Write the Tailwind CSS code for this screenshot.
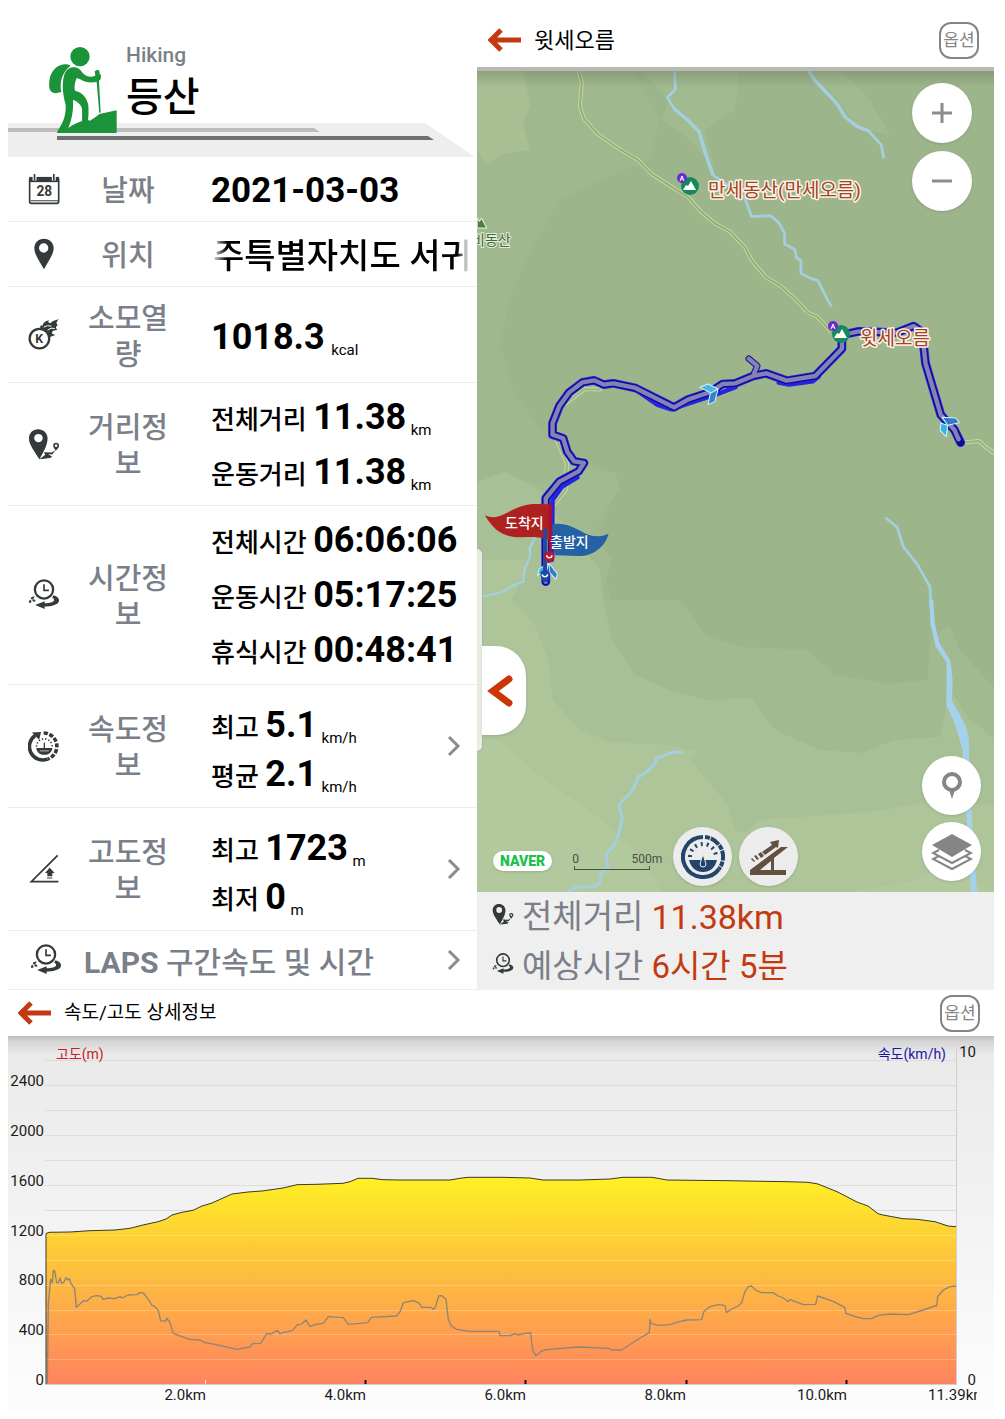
<!DOCTYPE html>
<html lang="ko">
<head>
    <meta charset="UTF-8">
    <meta name="viewport" content="width=device-width, initial-scale=1.0">
    <title>등산 기록 - 윗세오름</title>
    <script src="https://cdn.jsdelivr.net/npm/@tailwindcss/browser@4"></script>
</head>
<body class="min-h-screen bg-white font-['Roboto','Noto_Sans_CJK_KR',sans-serif] text-black">

    <!-- Shared icons -->
    <svg class="hidden">
        <symbol id="icon-clock" viewBox="22 26 98 98">
            <circle cx="71" cy="58" r="28" fill="none" stroke="currentColor" stroke-width="7"/>
            <path d="M71 42V61H86" fill="none" stroke="currentColor" stroke-width="5"/>
            <path d="M100 76Q118 82 117 93C114 106 90 110 73 110V118L44 106 73 94V100C88 100 101 97 102 91Q103 87 96 83Z" fill="currentColor"/>
            <path d="M32 82L42 79 40 86 30 89ZM25 92L31 90 33 97 26 100ZM34 89L41 88 46 94 38 96Z" fill="currentColor"/>
        </symbol>
        <symbol id="icon-route" viewBox="22 350 98 98">
            <path fill-rule="evenodd" d="M53 354C37 354 25 366 25 382C25 402 44 424 57 446C66 428 82 404 82 382C82 366 69 354 53 354ZM54 368A13 13 0 1 1 54 394A13 13 0 1 1 54 368Z" fill="currentColor"/>
            <path d="M57 446L75 432 70 424 94 425 106 418 96 431 84 430 96 438 90 442Z" fill="currentColor"/>
            <path fill-rule="evenodd" d="M108 395C102 395 99 399 99 404C99 410 104 414 107 420C112 414 117 410 117 404C117 399 114 395 108 395ZM108 400A4 4 0 1 1 108 408A4 4 0 1 1 108 400Z" fill="currentColor"/>
        </symbol>
        <symbol id="icon-chevron" viewBox="0 0 14 22">
            <path d="M2 2L11 11 2 20" fill="none" stroke="currentColor" stroke-width="3"/>
        </symbol>
        <symbol id="icon-back" viewBox="0 0 34 24">
            <path d="M33 12H4M13 2L3 12 13 22" fill="none" stroke="currentColor" stroke-width="5"/>
        </symbol>
        <symbol id="icon-summit" viewBox="0 0 22 22">
            <circle cx="13" cy="13" r="9" fill="#14895b"/>
            <path d="M6 17L9 12 11 13 14 8 19 17Z" fill="#fff"/>
            <circle cx="5" cy="5" r="5" fill="#6a2bd0"/>
            <path d="M5 3L3 8M5 3L7 8M4 6H6" fill="none" stroke="#fff" stroke-width="1"/>
        </symbol>
    </svg>

    <main class="pl-2 pr-[11px] pb-[7px]">
        <div class="grid grid-cols-[469fr_517fr]">

            <!-- Record summary -->
            <section class="min-w-0">
                <header class="relative h-[157px]">
                    <svg class="absolute inset-x-0 bottom-0 w-full" viewBox="8 123 469 34">
                        <path d="M8 123H425L475 157H8Z" fill="#eeeeee"/>
                        <path d="M8 128H314L320 132H8Z" fill="#bdbdbd"/>
                        <path d="M57 136H428L434 140H57Z" fill="#6d706f"/>
                    </svg>
                    <svg class="absolute left-10 top-[46px] h-[88px] w-[70px] text-[#1b9439]" viewBox="144 138 210 264" fill="currentColor">
                        <circle cx="240" cy="170" r="29"/>
                        <path d="M212 197C190 184 158 200 150 232C145 256 146 276 162 279C172 281 178 276 184 276C178 248 186 216 212 197Z"/>
                        <path d="M205 206C222 198 235 202 243 212C252 224 260 230 276 230L286 227 284 214 292 209 298 212 299 221 303 225 302 238 297 242 302 336 298 340 290 246C276 249 254 248 241 238L230 234C224 248 222 262 225 272C246 276 262 294 265 316C266 334 266 346 264 360L270 362 288 350 298 342 350 331V399H171L173 392C190 368 198 346 197 314C190 290 186 262 190 236C192 222 197 212 205 206Z"/>
                        <path d="M219 299C232 304 244 314 246 326C247 342 246 352 246 363C230 369 218 374 205 384C215 360 221 330 219 299Z" fill="#fff"/>
                    </svg>
                    <div class="pl-[118px] pt-[42px]">
                        <p class="text-[21px] leading-[26px] font-medium text-[#7b7f8a]">Hiking</p>
                        <h1 class="text-[40px] leading-[60px] font-medium">등산</h1>
                    </div>
                </header>

                <dl class="text-[26px] leading-[55px] font-medium">
                    <div class="grid grid-cols-[32px_88px_1fr] items-center gap-x-6 border-b border-[#ececec] py-1 pl-5">
                        <svg class="size-8 text-[#34393c]" viewBox="82 518 98 98" fill="none" stroke="currentColor">
                            <rect x="87" y="533" width="89" height="78" rx="6" stroke-width="5"/>
                            <path d="M86 530H177V546H86Z" fill="currentColor" stroke="none"/>
                            <path d="M102 522V541M161 522V541" stroke="#fff" stroke-width="12"/>
                            <path d="M102 521V541M161 521V541" stroke-width="5"/>
                            <path d="M90 603H174" stroke-width="3"/>
                            <text x="132" y="589" text-anchor="middle" font-size="42" font-weight="700" fill="currentColor" stroke="none">28</text>
                        </svg>
                        <dt class="pt-1 text-center text-[29px] leading-[36px] text-[#7b7f8a]">날짜</dt>
                        <dd class="pt-1 pl-[15px] text-[35px] leading-[52px] font-bold">2021-03-03</dd>
                    </div>

                    <div class="grid grid-cols-[32px_88px_1fr] items-center gap-x-6 border-b border-[#ececec] py-1 pl-5">
                        <svg class="size-8 text-[#34393c]" viewBox="82 714 96 96" fill="currentColor">
                            <path fill-rule="evenodd" d="M130 716C113 716 101 728 101 744C101 764 118 786 130 808C141 786 159 764 159 744C159 728 146 716 130 716ZM129 730A14 14 0 1 1 129 758A14 14 0 1 1 129 730Z"/>
                        </svg>
                        <dt class="pt-1 text-center text-[29px] leading-[36px] text-[#7b7f8a]">위치</dt>
                        <dd class="mr-[8px] ml-[15px] overflow-hidden whitespace-nowrap pt-1 pl-[2px] text-[34px] leading-[52px] [mask-image:linear-gradient(to_right,transparent,black_16px,black_246px,transparent)]">주특별자치도 서귀</dd>
                    </div>

                    <div class="grid grid-cols-[32px_88px_1fr] items-center gap-x-6 border-b border-[#ececec] pt-[10px] pb-[9px] pl-5">
                        <svg class="size-8 text-[#34393c]" viewBox="22 28 98 98">
                            <circle cx="57" cy="88" r="30" fill="none" stroke="currentColor" stroke-width="7"/>
                            <path d="M66 50C68 38 78 34 86 32C82 38 86 42 92 40C98 32 108 32 117 29C108 36 108 42 112 46L117 45C108 50 104 54 112 60C104 64 98 62 96 68C94 74 100 76 106 76C98 82 92 80 88 84C84 72 76 62 60 56C58 50 62 44 66 50Z" fill="currentColor"/>
                            <path d="M70 53Q82 45 94 50M82 62Q92 53 104 57" fill="none" stroke="#fff" stroke-width="3"/>
                            <text x="56" y="101" text-anchor="middle" font-size="38" font-weight="700" fill="currentColor">K</text>
                        </svg>
                        <dt class="pt-1 text-center text-[29px] leading-[36px] text-[#7b7f8a]">소모열량</dt>
                        <dd class="pt-[10px] pl-[15px] leading-[52px]"><b class="text-4xl leading-none">1018.3</b> <span class="align-sub text-[15px] leading-none font-normal">kcal</span></dd>
                    </div>

                    <div class="grid grid-cols-[32px_88px_1fr] items-center gap-x-6 border-b border-[#ececec] py-[2px] pl-5">
                        <svg class="size-8 text-[#34393c]"><use href="#icon-route"/></svg>
                        <dt class="pt-1 text-center text-[29px] leading-[36px] text-[#7b7f8a]">거리정보</dt>
                        <dd class="pt-2 pl-[15px]">
                            <p>전체거리 <b class="text-4xl leading-none">11.38</b> <span class="-ml-[2px] align-sub text-[15px] leading-none font-normal">km</span></p>
                            <p>운동거리 <b class="text-4xl leading-none">11.38</b> <span class="-ml-[2px] align-sub text-[15px] leading-none font-normal">km</span></p>
                        </dd>
                    </div>

                    <div class="grid grid-cols-[32px_88px_1fr] items-center gap-x-6 border-b border-[#ececec] pt-[2px] pb-[3px] pl-5">
                        <svg class="size-8 text-[#34393c]"><use href="#icon-clock"/></svg>
                        <dt class="pt-1 text-center text-[29px] leading-[36px] text-[#7b7f8a]">시간정보</dt>
                        <dd class="whitespace-nowrap pt-2 pl-[15px]">
                            <p>전체시간 <b class="text-4xl leading-none">06:06:06</b></p>
                            <p>운동시간 <b class="text-4xl leading-none">05:17:25</b></p>
                            <p>휴식시간 <b class="text-4xl leading-none">00:48:41</b></p>
                        </dd>
                    </div>

                    <div class="grid grid-cols-[32px_88px_1fr_14px] items-center gap-x-6 border-b border-[#ececec] py-[5px] pr-4 pl-5">
                        <svg class="size-8 text-[#34393c]" viewBox="22 476 98 98" fill="none" stroke="currentColor">
                            <path d="M44 493A41 41 0 0 0 82 565" stroke-width="11"/>
                            <path d="M34 484L62 482 56 506Z" fill="currentColor" stroke="none"/>
                            <path d="M70 485A41 41 0 0 1 82 565" stroke-width="11" stroke-dasharray="13 5"/>
                            <path d="M48 527A23 23 0 0 1 96 527" stroke-width="5" stroke-dasharray="4 6"/>
                            <path d="M47 531H97C95 545 84 552 72 552C60 552 49 545 47 531Z" fill="currentColor" stroke="none"/>
                            <path d="M72 515V535" stroke-width="4"/>
                            <path d="M58 540H86" stroke="#fff" stroke-width="2"/>
                        </svg>
                        <dt class="pt-1 text-center text-[29px] leading-[36px] text-[#7b7f8a]">속도정보</dt>
                        <dd class="pt-[14px] pl-[15px] leading-[49px]">
                            <p>최고 <b class="text-4xl leading-none">5.1</b> <span class="-ml-[2px] align-sub text-[15px] leading-none font-normal">km/h</span></p>
                            <p>평균 <b class="text-4xl leading-none">2.1</b> <span class="-ml-[2px] align-sub text-[15px] leading-none font-normal">km/h</span></p>
                        </dd>
                        <a href="#speed" aria-label="속도정보 보기"><svg class="h-[22px] w-[14px] text-[#8c8c8c]"><use href="#icon-chevron"/></svg></a>
                    </div>

                    <div class="grid grid-cols-[32px_88px_1fr_14px] items-center gap-x-6 border-b border-[#ececec] py-[5px] pr-4 pl-5">
                        <svg class="size-8 text-[#34393c]" viewBox="24 848 96 96" fill="none" stroke="currentColor">
                            <path d="M113 855L34 934H115" stroke-width="5"/>
                            <path d="M89 892L104 908H97V918H82V908H75Z" fill="currentColor" stroke="none"/>
                            <path d="M81 923H97" stroke-width="3"/>
                        </svg>
                        <dt class="pt-1 text-center text-[29px] leading-[36px] text-[#7b7f8a]">고도정보</dt>
                        <dd class="pt-[14px] pl-[15px] leading-[49px]">
                            <p>최고 <b class="text-4xl leading-none">1723</b> <span class="-ml-[2px] align-sub text-[15px] leading-none font-normal">m</span></p>
                            <p>최저 <b class="text-4xl leading-none">0</b> <span class="-ml-[2px] align-sub text-[15px] leading-none font-normal">m</span></p>
                        </dd>
                        <a href="#altitude" aria-label="고도정보 보기"><svg class="h-[22px] w-[14px] text-[#8c8c8c]"><use href="#icon-chevron"/></svg></a>
                    </div>
                </dl>

                <a href="#laps" class="flex h-[59px] items-center border-b border-[#ececec] pr-4 pl-[22px] text-[30px] font-medium text-[#7b7f8a]">
                    <svg class="size-8 text-[#34393c]"><use href="#icon-clock"/></svg>
                    <span class="grow pt-1 pl-[22px]"><b>LAPS</b> 구간속도 및 시간</span>
                    <svg class="h-[22px] w-[14px] text-[#8c8c8c]"><use href="#icon-chevron"/></svg>
                </a>
            </section>

            <!-- Route map -->
            <section class="flex min-w-0 flex-col">
                <header class="flex h-[71px] items-center border-b-4 border-[#b7b9b5] pt-[13px] pr-[15px] pl-[11px]">
                    <button type="button" aria-label="뒤로"><svg class="h-6 w-[34px] text-[#c43a10]"><use href="#icon-back"/></svg></button>
                    <h2 class="ml-3 grow text-[22px]">윗세오름</h2>
                    <button type="button" class="h-[37px] w-10 rounded-xl border-2 border-[#858585] text-[17px] leading-none text-[#858585]">옵션</button>
                </header>

                <div class="relative grow overflow-hidden bg-[#9db58b]">
                    <svg class="absolute inset-0 size-full" viewBox="477 71 517 821" preserveAspectRatio="xMidYMid slice">
                        <defs>
                            <linearGradient id="map-shade" x1="0" y1="0" x2="0" y2="1">
                                <stop offset="0" stop-color="#5c6b50" stop-opacity=".35"/>
                                <stop offset="1" stop-color="#5c6b50" stop-opacity="0"/>
                            </linearGradient>
                        </defs>
                        <!-- terrain -->
                        <path d="M477 68H630L660 120 650 160 600 180 560 200 530 250 510 300 500 345 515 395 548 440 620 480 600 530 610 600 477 600Z" fill="#a0b88e"/>
                        <path d="M477 68H523L530 105 523 125 530 150 500 155 486 165 477 150Z" fill="#a8bf94"/>
                        <path d="M640 68L668 100 662 120 690 140 715 170 705 130 735 110 740 68Z" fill="#a2ba90"/>
                        <path d="M800 68L830 90 860 130 890 135 870 100 840 68Z" fill="#a2ba90"/>
                        <path d="M477 482L505 472 540 485 575 470 615 472 620 490 590 530 612 560 600 600 680 600 705 635 740 647 806 650 835 675 890 684 928 680 930 640 950 625 960 650 994 688V892H477Z" fill="#a2ba90"/>
                        <path d="M477 482L505 472 540 490 560 520 600 570 603 600 612 640 635 675 670 690 705 700 752 698 775 730 820 750 860 753 895 740 940 737 950 690 970 720 994 738V892H477Z" fill="#a8c095"/>
                        <path d="M477 560L530 560 512 600 535 625 548 660 553 700 580 730 610 742 670 745 697 751 690 760 728 805 735 830 745 833 760 820 870 812 940 800 994 805V892H477Z" fill="#aec59a"/>
                        <path d="M498 740L545 780 595 815 630 845 662 892H477V740Z" fill="#b2c99e"/>
                        <path d="M850 892L910 882 950 865 994 892Z" fill="#b2c99e"/>

                        <!-- streams and trails, upper half -->
                        <g transform="translate(470 0) scale(.3412 .3333)" fill="none" stroke-linejoin="round">
                            <path d="M599 200L602 268 578 292 600 328 640 362 672 396 690 460 712 525 745 548 806 595 825 650 882 647 905 668 922 700 922 732 952 748 956 772 970 782 970 820 1000 836 1020 842 1048 900 1060 920" stroke="#a3cfe0" stroke-width="8"/>
                            <path d="M600 328L640 362 672 396 690 460 712 525M985 200L1010 240 1075 310 1100 352 1135 380 1170 394" stroke="#a3cfe0" stroke-width="10"/>
                            <path d="M1168 393L1205 434 1213 475" stroke="#a3cfe0" stroke-width="8"/>
                            <path d="M316 200L328 248 322 318 334 356 374 402 442 450 490 478 532 522 590 560 640 592 676 634 720 672 762 695 806 742 826 782 868 832 910 858 956 900 990 938 1018 950 1060 998" stroke="#c9e0a0" stroke-width="11"/>
                            <path d="M316 200L328 248 322 318 334 356 374 402 442 450 490 478 532 522 590 560 640 592 676 634 720 672 762 695 806 742 826 782 868 832 910 858 956 900 990 938 1018 950 1060 998" stroke="#93ad7c" stroke-width="6"/>
                            <path d="M21 655L28 664 34 655 49 684H21Z" fill="#4d7f45" stroke="#e8f0df" stroke-width="3"/>
                        </g>

                        <g transform="translate(470 300) scale(.3412 .3333)" fill="none" stroke-linejoin="round" stroke-linecap="round">
                            <path d="M382 268H334L280 310M250 410L284 490 280 570 245 615M1440 428L1492 423 1510 440 1540 462" stroke="#c9e0a0" stroke-width="12"/>
                            <path d="M382 268H334L280 310M250 410L284 490 280 570 245 615M1440 428L1492 423 1510 440 1540 462" stroke="#9db58b" stroke-width="7"/>
                            <path d="M190 715L175 745 176 770 160 810 156 845 130 855 90 878 36 890" stroke="#a3cfe0" stroke-width="7"/>
                            <path d="M1220 655L1252 682 1270 740 1310 792 1348 860 1354 965" stroke="#a3cfe0" stroke-width="8"/>

                            <!-- walked route -->
                            <g stroke="#2424e4">
                                <path d="M222 845L222 595 262 545 318 514 334 489 305 484 285 455 273 415 242 404 242 370 262 318 290 278 330 247 364 241 392 254 420 250 485 264 598 322 640 298 705 276 740 252 778 250 830 228 868 220 928 242 1012 228 1090 146V105L1140 94 1250 98 1300 78 1325 96 1335 190 1380 345 1420 390 1438 428" stroke-width="26"/>
                                <path d="M240 780L242 600 270 560 315 532M500 280L550 315 590 328 720 284 778 262M905 248L935 254 1005 244 1022 230M832 222L842 198 817 176" stroke-width="13"/>
                            </g>
                            <g stroke="#0d0d94">
                                <path d="M222 845L222 595 262 545 318 514 334 489 305 484 285 455 273 415 242 404 242 370 262 318 290 278 330 247 364 241 392 254 420 250 485 264 598 322 640 298 705 276 740 252 778 250 830 228 868 220 928 242 1012 228 1090 146V105L1140 94 1250 98 1300 78 1325 96 1335 190 1380 345 1420 390 1438 428" stroke-width="21"/>
                                <path d="M832 222L842 198 817 176" stroke-width="19"/>
                            </g>
                            <path d="M222 845L222 595 262 545 318 514 334 489 305 484 285 455 273 415 242 404 242 370 262 318 290 278 330 247 364 241 392 254 420 250 485 264 598 322 640 298 705 276 740 252 778 250 830 228 868 220 928 242 1012 228 1090 146V105L1140 94 1250 98 1300 78 1325 96 1335 190 1380 345 1420 390 1432 418M832 222L842 198 817 176" stroke="#8581b6" stroke-width="13"/>

                            <!-- direction arrows -->
                            <g stroke="#d5f1fa" stroke-width="3">
                                <path d="M674 262L698 252 727 267 712 282Z" fill="#45b8e6"/>
                                <path d="M727 267L718 304 698 314 704 280Z" fill="#2f86cc"/>
                                <path d="M1384 352L1424 354 1434 368 1400 376Z" fill="#2f7cc8"/>
                                <path d="M1380 370L1400 376 1396 410 1378 392Z" fill="#35b5e0"/>
                                <path d="M232 790L256 822 252 838 232 816Z" fill="#2f7cc8"/>
                                <path d="M232 790L203 806 198 826 222 815Z" fill="#35b5e0"/>
                            </g>

                            <!-- start and finish flags -->
                            <path d="M44 646C90 668 115 618 185 612L236 613V724C200 702 160 716 125 710C88 704 65 684 44 646Z" fill="#ae211f"/>
                            <path d="M238 674C290 662 318 696 352 706Q382 713 406 701C396 740 362 768 318 768L248 766Z" fill="#2561a5"/>
                            <path d="M236 614V760" stroke="#a0123c" stroke-width="10"/>
                            <path d="M220 690V820" stroke="#1f4aa0" stroke-width="11"/>
                            <circle cx="232" cy="770" r="16" fill="#b01838"/>
                            <path d="M225 768A8 8 0 0 0 240 768" stroke="#fff" stroke-width="5"/>
                            <path d="M206 824A14 14 0 0 1 234 824L228 846H214Z" fill="#1a48a8"/>
                            <path d="M212 825A8 8 0 0 0 227 825" stroke="#fff" stroke-width="5"/>
                        </g>

                        <!-- streams, lower half -->
                        <g transform="translate(470 600) scale(.3412 .3333)" fill="none" stroke-linejoin="round">
                            <path d="M626 459L602 455 545 475 543 490 515 518 494 530 475 574 436 615 446 655 438 695 425 730 398 766 404 804 385 820 380 850 362 860 310 862 285 876" stroke="#a3cfe0" stroke-width="9"/>
                            <path d="M1346 0H1358L1362 70 1376 130 1408 182 1415 245 1412 300 1452 375 1461 410 1464 490 1472 680 1486 876H1468L1458 700 1444 450 1420 370 1396 315 1397 188 1365 140 1350 75Z" fill="#a6d1ec"/>
                        </g>
                        <rect x="477" y="71" width="517" height="16" fill="url(#map-shade)"/>

                        <!-- place names -->
                        <use href="#icon-summit" x="677" y="173" width="22" height="22"/>
                        <use href="#icon-summit" x="828" y="321" width="22" height="22"/>
                        <g fill="#a34420" stroke="#fbf3ea" stroke-width="3" paint-order="stroke" stroke-linejoin="round" font-size="19">
                            <text x="708" y="197">만세동산(만세오름)</text>
                            <text x="860" y="345">윗세오름</text>
                        </g>
                        <text x="472" y="245" font-size="14" fill="#3f6a3b" stroke="#e3ecd9" stroke-width="2" paint-order="stroke">비동산</text>
                        <text x="505" y="528" font-size="14" font-weight="500" fill="#fff">도착지</text>
                        <text x="550" y="547" font-size="14" font-weight="500" fill="#fff">출발지</text>
                    </svg>

                    <div class="absolute top-3 right-[22px] flex flex-col gap-2">
                        <button type="button" aria-label="확대" class="flex size-[60px] items-center justify-center rounded-full bg-white shadow">
                            <svg class="size-5" viewBox="0 0 20 20"><path d="M10 0V20M0 10H20" stroke="#8c8c8c" stroke-width="3"/></svg>
                        </button>
                        <button type="button" aria-label="축소" class="flex size-[60px] items-center justify-center rounded-full bg-white shadow">
                            <svg class="size-5" viewBox="0 0 20 20"><path d="M0 10H20" stroke="#8c8c8c" stroke-width="3"/></svg>
                        </button>
                    </div>

                    <!-- side drawer handle -->
                    <div class="absolute bottom-[140px] left-0 h-[204px] w-[6px] rounded-r-md border border-l-0 border-[#a9b3a2] bg-white/70"></div>
                    <button type="button" aria-label="패널 열기" class="absolute bottom-[157px] left-[5px] flex h-[89px] w-[44px] items-center rounded-r-[30px] bg-white pl-1 shadow">
                        <svg class="h-[34px] w-7" viewBox="0 0 28 34"><path d="M23 5L7 17 23 29" fill="none" stroke="#cc3508" stroke-width="7" stroke-linecap="round"/></svg>
                    </button>

                    <div class="absolute right-[13px] bottom-[11px] flex flex-col gap-[7px]">
                        <button type="button" aria-label="현재 위치" class="flex size-[59px] items-center justify-center rounded-full bg-white shadow">
                            <svg class="h-7 w-5" viewBox="0 0 20 28"><circle cx="10" cy="10" r="8" fill="none" stroke="#858585" stroke-width="4"/><path d="M7 18H13L10 27Z" fill="#858585"/></svg>
                        </button>
                        <button type="button" aria-label="지도 종류" class="flex size-[59px] items-center justify-center rounded-full bg-white shadow">
                            <svg class="h-[38px] w-[42px]" viewBox="0 0 42 38"><path d="M21 1L41 12 21 24 1 12Z" fill="#858585"/><path d="M8 17L2 20 21 30 40 20 34 17M8 23L2 26 21 36 40 26 34 23" fill="none" stroke="#858585" stroke-width="2"/></svg>
                        </button>
                    </div>

                    <div class="absolute bottom-[6px] left-4 flex items-center">
                        <a href="#naver" class="mt-2 rounded-full bg-white px-[7px] text-[14px] leading-5 font-black text-[#1cc04c] shadow">NAVER</a>
                        <div class="mt-2 ml-5 text-[12px] leading-[14px] text-[#4a4f46]">
                            <div class="flex w-[90px] justify-between"><span>0</span><span>500m</span></div>
                            <div class="ml-[2px] h-1 w-[76px] border border-t-0 border-[#4a4f46]"></div>
                        </div>
                        <button type="button" aria-label="속도 그래프" class="ml-[11px] flex size-[59px] items-center justify-center rounded-full bg-[#ececec] shadow">
                            <svg class="size-11" viewBox="0 0 44 44" fill="none" stroke="#23456b">
                                <path d="M22 2A20 20 0 1 0 38 34" stroke-width="4"/>
                                <path d="M24 2A20 20 0 0 1 38 34" stroke-width="4" stroke-dasharray="5 1 10 1"/>
                                <path d="M9 22A13 13 0 0 1 35 22" stroke-width="4" stroke-dasharray="2 4"/>
                                <path d="M8 25H36C34 33 29 37 22 37C15 37 10 33 8 25Z" fill="#23456b" stroke="none"/>
                                <path d="M22 19L25 29A3 3 0 1 1 19 29Z" fill="#23456b" stroke="#ececec" stroke-width="1"/>
                            </svg>
                        </button>
                        <button type="button" aria-label="고도 그래프" class="ml-[7px] flex size-[59px] items-center justify-center rounded-full bg-[#ececec] shadow">
                            <svg class="h-9 w-[38px]" viewBox="0 0 38 36" fill="#64503f">
                                <path fill-rule="evenodd" d="M0 31L31 8 38 8 24 19V31H36V36H0ZM10 31H21V22Z"/>
                                <path d="M12 13L22 6 20 3 29 1 28 9 26 8 15 16ZM8 15L11 13 14 17 11 19ZM4 17L6 16 9 20 7 21ZM1 20L2 19 5 22 4 23Z"/>
                            </svg>
                        </button>
                    </div>
                </div>

                <div class="bg-[#efefef] pb-[10px]">
                    <ul class="h-[88px] overflow-hidden pl-[15px] text-[33px] leading-[50px] text-[#7b7f8a]">
                        <li class="flex items-center">
                            <svg class="mr-2 mb-[6px] size-[22px] text-[#34393c]"><use href="#icon-route"/></svg>
                            전체거리<span class="ml-2 text-[34px] text-[#c43a10]">11.38km</span>
                        </li>
                        <li class="flex items-center">
                            <svg class="mr-2 mb-[6px] size-[22px] text-[#34393c]"><use href="#icon-clock"/></svg>
                            예상시간<span class="ml-2 text-[#c43a10]">6시간 5분</span>
                        </li>
                    </ul>
                </div>
            </section>
        </div>

        <!-- Speed and altitude chart -->
        <section>
            <header class="flex h-[46px] items-center pr-[14px] pl-[10px]">
                <button type="button" aria-label="뒤로"><svg class="h-6 w-[34px] text-[#c43a10]"><use href="#icon-back"/></svg></button>
                <h2 class="ml-3 grow text-[19px]">속도/고도 상세정보</h2>
                <button type="button" class="h-[37px] w-10 rounded-xl border-2 border-[#858585] text-[17px] leading-none text-[#858585]">옵션</button>
            </header>

            <svg class="block w-full" viewBox="8 1036 986 376" font-size="15">
                <defs>
                    <linearGradient id="panel" x1="0" y1="0" x2="0" y2="1">
                        <stop offset="0" stop-color="#bcbcbc"/>
                        <stop offset=".015" stop-color="#d6d6d6"/>
                        <stop offset=".05" stop-color="#eaeaea"/>
                        <stop offset="1" stop-color="#fdfdfd"/>
                    </linearGradient>
                    <linearGradient id="area" gradientUnits="userSpaceOnUse" x1="0" y1="1177" x2="0" y2="1384">
                        <stop offset="0" stop-color="#fff024"/>
                        <stop offset=".5" stop-color="#fdba40"/>
                        <stop offset="1" stop-color="#ff835f"/>
                    </linearGradient>
                    <clipPath id="plot"><rect x="8" y="1036" width="969" height="376"/></clipPath>
                </defs>
                <rect x="8" y="1036" width="986" height="376" fill="url(#panel)"/>
                <path d="M45 1060.500H957M45 1085.500H957M45 1110.500H957M45 1135.500H957M45 1160.500H957M45 1185.500H957M45 1210.500H957" stroke="#dcdcdc"/>

                <!-- altitude -->
                <path d="M46 1384V1233.500L49 1232.300 70 1232 90 1230.700 115 1230 130 1228.300 143 1225 158 1221.700 166 1219 172 1215 182 1212.300 193 1210.300 202 1206 212 1203 232 1194 248 1192 262 1191 283 1188 297 1184.700 317 1184.300 343 1183.300 350 1181.700 358 1178.300H372L383 1179.700 400 1180H450L460 1178.300 468 1177.300H503L530 1178 543 1180H580L610 1179 623 1177.300H652L667 1180 727 1180.700 787 1181.700 808 1182.300 818 1184 837 1191.700 857 1202 868 1206 878 1213.700 883 1215 903 1218.700 917 1219.300 935 1221.700 948 1226 956 1226.700V1384Z" fill="url(#area)"/>
                <path d="M46 1384V1233.500L49 1232.300 70 1232 90 1230.700 115 1230 130 1228.300 143 1225 158 1221.700 166 1219 172 1215 182 1212.300 193 1210.300 202 1206 212 1203 232 1194 248 1192 262 1191 283 1188 297 1184.700 317 1184.300 343 1183.300 350 1181.700 358 1178.300H372L383 1179.700 400 1180H450L460 1178.300 468 1177.300H503L530 1178 543 1180H580L610 1179 623 1177.300H652L667 1180 727 1180.700 787 1181.700 808 1182.300 818 1184 837 1191.700 857 1202 868 1206 878 1213.700 883 1215 903 1218.700 917 1219.300 935 1221.700 948 1226 956 1226.700" fill="none" stroke="#3b3826"/>
                <path d="M46 1235.500H957M46 1260.500H957M46 1285.500H957M46 1310.500H957M46 1334.500H957M46 1359.500H957" stroke="#fff" stroke-opacity=".25"/>

                <!-- speed -->
                <g transform="translate(0 1030) scale(.33333)" fill="none" stroke="#8d8678" stroke-width="4" stroke-linejoin="round">
                    <path d="M142 1060L145 820 152 748 157 758 160 722 164 722 170 758 176 758 180 744 185 760 192 756 198 743 204 750 208 746 214 762 224 776 229 832 240 822 250 812 260 814 275 800 290 797 304 799 309 808 325 804 345 806 360 800 366 804 385 795 410 794 420 788 430 789 445 808 456 826 465 830 475 842 482 872 497 874 500 864 510 878 520 910 545 920 570 928 600 930 615 938 660 946 710 958 750 951 758 941 782 940 800 911 815 912 825 904 835 903 840 912 850 907 878 902 892 884 904 883 918 870 930 889 945 884 970 880 985 860 1030 863 1045 883 1104 878 1114 862 1190 858 1200 845 1210 818 1240 812 1255 818 1266 832 1292 832 1300 838 1306 832 1316 798 1326 797 1338 808 1345 868 1354 888 1370 898 1410 904H1497L1500 917 1530 917 1545 911 1555 915 1575 910 1592 909 1598 960 1608 977 1625 963 1640 959 1735 951 1826 955 1834 960H1865L1920 924 1948 908 1950 868 1953 880 1975 886 2010 884 2040 874 2060 870 2105 869 2112 844 2130 830 2155 824 2175 827 2179 848 2190 840 2215 828 2225 818 2235 785 2245 770 2254 768 2268 781 2285 788 2318 788 2335 798 2350 804 2365 815 2370 809 2410 824 2447 823 2453 798 2500 814 2534 832 2538 850 2560 858 2590 866 2615 866 2635 856 2670 852 2725 854 2760 843 2805 828 2810 828 2813 800 2830 780 2850 770 2869 768"/>
                </g>
                <path d="M956.500 1050V1384M45 1384.500H957" stroke="#cfcfcf"/>
                <path d="M205.500 1380V1384" stroke="#e6e6e6"/>
                <path d="M365.500 1380V1384M525.500 1380V1384M686.500 1380V1384M846.500 1380V1384" stroke="#111" stroke-width="2"/>

                <g text-anchor="end" fill="#1a1a1a">
                    <text x="44" y="1086">2400</text>
                    <text x="44" y="1136">2000</text>
                    <text x="44" y="1186">1600</text>
                    <text x="44" y="1236">1200</text>
                    <text x="44" y="1285">800</text>
                    <text x="44" y="1335">400</text>
                    <text x="44" y="1385">0</text>
                    <text x="976" y="1057">10</text>
                    <text x="976" y="1385">0</text>
                    <text x="206" y="1400">2.0km</text>
                    <text x="366" y="1400">4.0km</text>
                    <text x="526" y="1400">6.0km</text>
                    <text x="686" y="1400">8.0km</text>
                    <text x="847" y="1400">10.0km</text>
                </g>
                <text x="928" y="1400" fill="#1a1a1a" clip-path="url(#plot)">11.39km</text>
                <text x="56" y="1059" font-size="14" fill="#c8202a">고도(m)</text>
                <text x="946" y="1059" font-size="14" text-anchor="end" fill="#1c16a8">속도(km/h)</text>
            </svg>
        </section>
    </main>
</body>
</html>
